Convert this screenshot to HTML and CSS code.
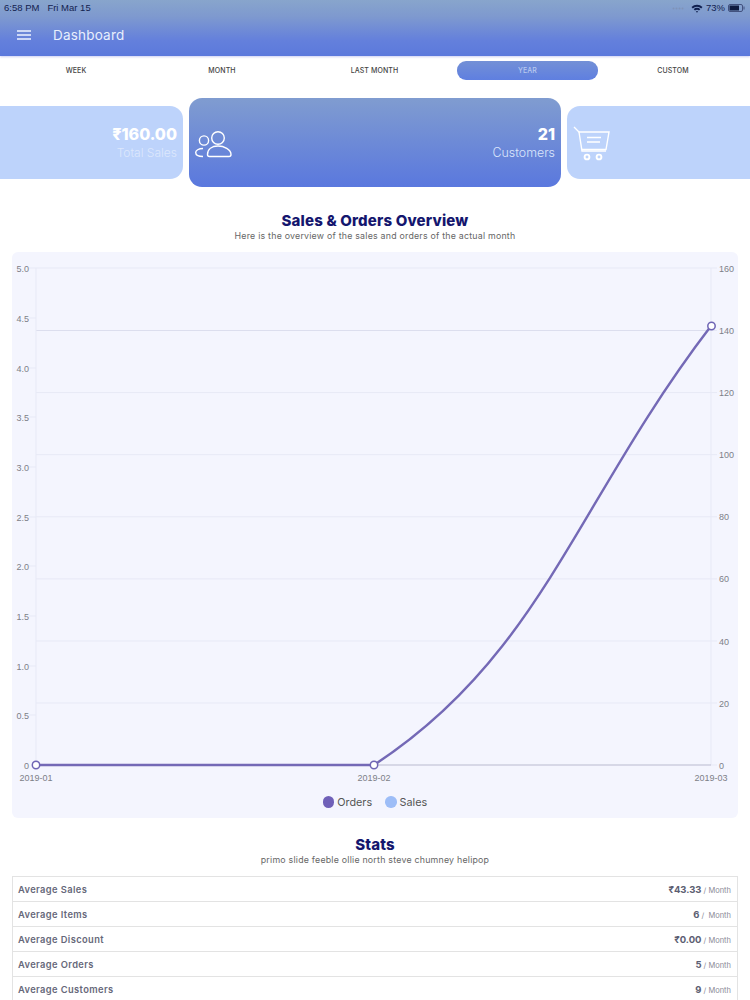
FILE: index.html
```html
<!DOCTYPE html>
<html lang="en">
<head>
<meta charset="utf-8">
<title>Dashboard</title>
<link rel="stylesheet" href="styles.css">
</head>
<body>
<header class="appbar">
  <div class="status">
    <div class="status-left"><span>6:58 PM</span><span>Fri Mar 15</span></div>
    <div class="status-right">
      <svg class="signal" width="13" height="3" viewBox="0 0 13 3"><g fill="#7f93b8"><circle cx="1.5" cy="1.5" r="1"/><circle cx="4.5" cy="1.5" r="1"/><circle cx="7.5" cy="1.5" r="1"/><circle cx="10.5" cy="1.5" r="1"/></g></svg>
      <svg width="12" height="9" viewBox="0 0 12 9"><path d="M0.5 3 A8 8 0 0 1 11.5 3 L10.2 4.4 A6 6 0 0 0 1.8 4.4 Z M2.7 5.3 A4.4 4.4 0 0 1 9.3 5.3 L8 6.6 A2.6 2.6 0 0 0 4 6.6 Z M4.9 7.4 A1.6 1.6 0 0 1 7.1 7.4 L6 8.7 Z" fill="#10204f"/></svg>
      <span>73%</span>
      <svg width="17" height="8" viewBox="0 0 17 8"><rect x="0.5" y="0.5" width="14" height="7" rx="1.5" fill="none" stroke="#42527f"/><rect x="1.5" y="1.5" width="9.5" height="5" fill="#0e1a40"/><rect x="15.5" y="2.5" width="1" height="3" fill="#42527f"/></svg>
    </div>
  </div>
  <div class="toolbar">
    <svg class="menu" width="14" height="10" viewBox="0 0 14 10"><path d="M0 1h14M0 5h14M0 9h14" stroke="#eef3ff" stroke-width="1.5"/></svg>
    <span class="toolbar-title">Dashboard</span>
  </div>
</header>

<nav class="tabs">
  <span class="tab">WEEK</span>
  <span class="tab">MONTH</span>
  <span class="tab">LAST MONTH</span>
  <span class="tab tab-active">YEAR</span>
  <span class="tab">CUSTOM</span>
</nav>

<section class="cards">
  <div class="card card-side">
    <div class="card-text"><b>₹160.00</b><span>Total Sales</span></div>
  </div>
  <div class="card card-main">
    <svg class="card-icon" width="38" height="30" viewBox="0 0 38 30" fill="none" stroke="#fff" stroke-width="1.4">
      <circle cx="23" cy="10" r="6.3"/>
      <path d="M12.5 26.500 C12.500 21 17 18 23 18 C29 18 36 21.500 36 26.500 C36 28 35 28.500 34 28.500 H14.500 C13 28.500 12.500 28 12.500 26.500 Z"/>
      <circle cx="9" cy="12.500" r="4.600"/>
      <path d="M8 20.500 C3.500 20.500 0.700 22.500 0.700 24.500 C0.700 27 3.500 28.500 8 28.500"/>
    </svg>
    <div class="card-text"><b>21</b><span>Customers</span></div>
  </div>
  <div class="card card-side">
    <svg class="card-icon" width="38" height="36" viewBox="0 -1 38 36" fill="none" stroke="#fff" stroke-width="1.4">
      <path d="M1 1 L6 6 L9 25 H33"/>
      <path d="M5.500 6 H36 L33 23.500 H9"/>
      <path d="M14 11.500 H28 M14 16 H27" stroke-width="1.600"/>
      <circle cx="14" cy="31" r="2.400" stroke-width="1.900"/>
      <circle cx="26" cy="31" r="2.400" stroke-width="1.900"/>
    </svg>
  </div>
</section>

<section class="heading heading-sales">
  <h2>Sales &amp; Orders Overview</h2>
  <p>Here is the overview of the sales and orders of the actual month</p>
</section>

<section class="chart-panel">
  <svg class="chart" width="726" height="536" viewBox="0 0 726 536">
    <g class="grid">
      <path class="grid-strong" d="M24 78.500H699"/>
      <path d="M24 16H699M24 140.600H699M24 202.700H699M24 264.800H699M24 326.900H699M24 389H699M24 451H699"/>
      <path d="M24 16V513M699 16V513"/>
      <path d="M17 16H24M17 66H24M17 116H24M17 165H24M17 215H24M17 265H24M17 314H24M17 364H24M17 414H24M17 463H24M699 16H705M699 78.500H705M699 140.600H705M699 202.700H705M699 264.800H705M699 326.900H705M699 389H705M699 451H705M699 513H705"/>
    </g>
    <path class="baseline" d="M24 513H699"/>
    <g class="axis axis-left">
      <text x="17" y="19.500">5.0</text><text x="17" y="69.500">4.5</text><text x="17" y="119.500">4.0</text><text x="17" y="168.500">3.5</text><text x="17" y="218.500">3.0</text><text x="17" y="268.500">2.5</text><text x="17" y="317.500">2.0</text><text x="17" y="367.500">1.5</text><text x="17" y="417.500">1.0</text><text x="17" y="466.500">0.5</text><text x="17" y="516.500">0</text>
    </g>
    <g class="axis axis-right">
      <text x="707" y="19.500">160</text><text x="707" y="82">140</text><text x="707" y="144">120</text><text x="707" y="206">100</text><text x="707" y="268">80</text><text x="707" y="330">60</text><text x="707" y="392.500">40</text><text x="707" y="454.500">20</text><text x="707" y="516.500">0</text>
    </g>
    <g class="axis axis-bottom">
      <text x="24" y="528.500">2019-01</text><text x="362" y="528.500">2019-02</text><text x="699" y="528.500">2019-03</text>
    </g>
    <path class="line" d="M24 513H362C529 404 564 250 699 74"/>
    <g class="dots"><circle cx="24" cy="513" r="3.700"/><circle cx="362" cy="513" r="3.700"/><circle cx="699.500" cy="74" r="3.700"/></g>
  </svg>
  <div class="legend">
    <span class="legend-item"><i class="swatch swatch-orders"></i>Orders</span>
    <span class="legend-item"><i class="swatch swatch-sales"></i>Sales</span>
  </div>
</section>

<section class="heading heading-stats">
  <h2>Stats</h2>
  <p>primo slide feeble ollie north steve chumney helipop</p>
</section>

<section class="stats">
  <div class="row"><span class="label">Average Sales</span><span class="value"><b>₹43.33</b> / Month</span></div>
  <div class="row"><span class="label">Average Items</span><span class="value"><b>6</b> /&nbsp; Month</span></div>
  <div class="row"><span class="label">Average Discount</span><span class="value"><b>₹0.00</b> / Month</span></div>
  <div class="row"><span class="label">Average Orders</span><span class="value"><b>5</b> / Month</span></div>
  <div class="row"><span class="label">Average Customers</span><span class="value"><b>9</b> / Month</span></div>
</section>
</body>
</html>
```

FILE: styles.css
```css
* { box-sizing: border-box; }
html, body { margin: 0; padding: 0; height: 1000px; overflow: hidden; background: #fff; }
body { font-family: Inter, "Noto Sans", "Liberation Sans", sans-serif; color: #444; }

.appbar {
  height: 56px;
  background: linear-gradient(180deg, #88a5cc 0%, #7e99cf 30%, #6480dc 72%, #5b79dc 100%);
  box-shadow: 0 1px 2px rgba(110, 120, 220, .35);
}
.status {
  height: 14px;
  padding: 2px 5px 0 4px;
  display: flex;
  justify-content: space-between;
  align-items: center;
  font: 9.5px/12px "Liberation Sans", sans-serif;
  color: #13224f;
}
.status-left { display: flex; gap: 8px; }
.status-right { display: flex; align-items: center; gap: 3px; }
.signal { margin-right: 3px; }
.toolbar { height: 42px; padding: 0 0 0 17px; display: flex; align-items: center; }
.menu { margin-right: 22px; }
.toolbar-title { font-size: 13.5px; color: #e8effd; letter-spacing: .2px; }

.tabs {
  display: grid;
  grid-template-columns: 152px 140px 165px 141px 150px;
  height: 19px;
  margin-top: 5px;
}
.tab {
  display: flex;
  align-items: center;
  justify-content: center;
  font-size: 7px;
  font-weight: 500;
  letter-spacing: .1px;
  color: #444;
}
.tab-active {
  border-radius: 9px;
  background: linear-gradient(180deg, #7390d6, #5f7fe0);
  color: #b8c9ef;
}

.cards {
  display: flex;
  justify-content: center;
  align-items: center;
  gap: 6px;
  height: 89px;
  margin-top: 18px;
  overflow: hidden;
}
.card {
  flex: 0 0 372px;
  display: flex;
  align-items: center;
  justify-content: space-between;
  padding: 0 6px;
  border-radius: 13px;
}
.card-side { height: 73px; background: #bdd3fb; }
.card-side .card-text { margin-left: auto; }
.card-main { height: 89px; background: linear-gradient(180deg, #809cd0 0%, #5a78de 100%); }
.card-text { display: flex; flex-direction: column; align-items: flex-end; padding-top: 1px; }
.card-text b { font-size: 16px; line-height: 20px; font-weight: 800; color: #fff; }
.card-text span { font-size: 12.4px; line-height: 18px; color: #dbe5fb; font-weight: 300; }
.card-side .card-text span { font-size: 12px; color: #dce7fc; }

.heading { text-align: center; }
.heading h2 { margin: 0; font-size: 15px; line-height: 18px; font-weight: 800; letter-spacing: .17px; color: #14166e; }
.heading p { margin: 0; font-size: 8.8px; line-height: 11px; letter-spacing: .23px; color: #666; }
.heading-sales { margin-top: 25px; }
.heading-stats { margin-top: 18px; }

.chart-panel {
  margin: 11px 12px 0;
  height: 566px;
  border-radius: 6px;
  background: #f4f5fe;
}
.chart { display: block; }
.grid path { fill: none; stroke: #e7e9f6; stroke-width: 1; }
.grid .grid-strong { stroke: #dcdeee; }
.baseline { stroke: #b9bacf; stroke-width: 1; }
.axis text { font: 9px "Liberation Sans", sans-serif; fill: #7d7f88; }
.axis-left text { text-anchor: end; }
.axis-bottom text { text-anchor: middle; }
.line { fill: none; stroke: #7469b6; stroke-width: 2.4; }
.dots circle { fill: #fff; stroke: #6f65b5; stroke-width: 1.500; }
.legend {
  display: flex;
  justify-content: center;
  align-items: center;
  gap: 13px;
  height: 28px;
  font-size: 10.8px;
  color: #555;
}
.legend-item { display: flex; align-items: center; gap: 3px; }
.swatch { width: 11.500px; height: 11.500px; border-radius: 50%; }
.swatch-orders { background: #6f60b8; }
.swatch-sales { background: #9dbdf7; }

.stats { margin: 11px 12px 0; border: 1px solid #e3e3e3; border-bottom: 0; }
.row {
  height: 25px;
  padding: 0 6px 0 5px;
  display: flex;
  justify-content: space-between;
  align-items: center;
  border-bottom: 1px solid #e3e3e3;
}
.label { font-size: 9.3px; font-weight: 600; letter-spacing: .4px; color: #66687a; }
.value { font-size: 7.5px; color: #8a8a96; }
.value b { font-size: 9.5px; font-weight: 700; color: #5c5e72; }
```
